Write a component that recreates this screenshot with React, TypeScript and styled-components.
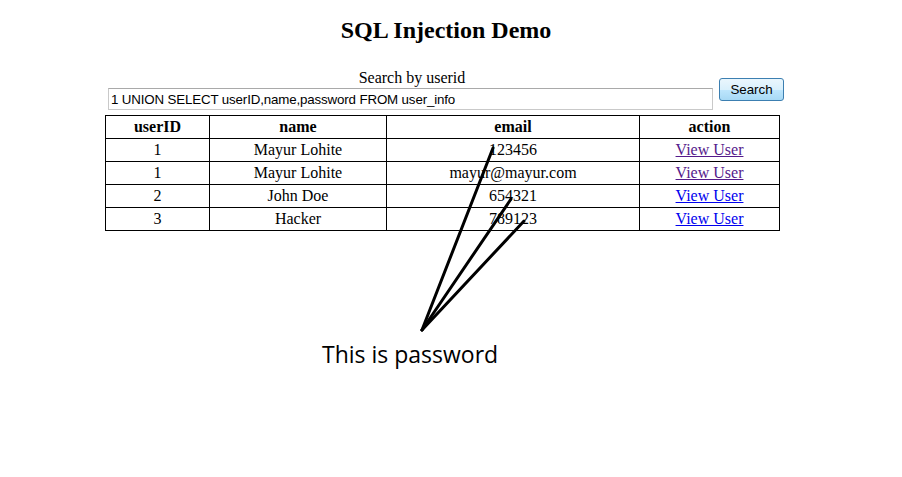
import styled, { createGlobalStyle } from "styled-components";

const GlobalStyle = createGlobalStyle`
  html, body {
    margin: 0;
    padding: 0;
    background: #ffffff;
    font-family: "Liberation Serif", "Times New Roman", serif;
    color: #000000;
  }
`;

type User = { id: string; name: string; email: string; visited: boolean };

const users: User[] = [
  { id: "1", name: "Mayur Lohite", email: "123456", visited: true },
  { id: "1", name: "Mayur Lohite", email: "mayur@mayur.com", visited: true },
  { id: "2", name: "John Doe", email: "654321", visited: false },
  { id: "3", name: "Hacker", email: "789123", visited: false },
];

const columns = [
  { label: "userID", width: 104 },
  { label: "name", width: 177 },
  { label: "email", width: 253 },
  { label: "action", width: 140 },
];

export default function App() {
  return (
    <>
      <GlobalStyle />
      <Page>
        <Title>SQL Injection Demo</Title>
        <SearchForm>
          <Field>
            <Label>Search by userid</Label>
            <Input defaultValue="1 UNION SELECT userID,name,password FROM user_info" />
          </Field>
          <SearchButton>Search</SearchButton>
        </SearchForm>
        <Table>
          <colgroup>
            {columns.map((c) => (
              <col key={c.label} style={{ width: c.width }} />
            ))}
          </colgroup>
          <thead>
            <tr>
              {columns.map((c) => (
                <Th key={c.label}>{c.label}</Th>
              ))}
            </tr>
          </thead>
          <tbody>
            {users.map((u, i) => (
              <tr key={i}>
                <Td>{u.id}</Td>
                <Td>{u.name}</Td>
                <Td>{u.email}</Td>
                <Td>
                  <UserLink href="#" $visited={u.visited}>
                    View User
                  </UserLink>
                </Td>
              </tr>
            ))}
          </tbody>
        </Table>
        <Note>This is password</Note>
        <Arrows width="902" height="477" viewBox="0 0 902 477">
          <g stroke="#000" strokeWidth="3" strokeLinecap="round" fill="none">
            <line x1="422" y1="330" x2="493" y2="148" />
            <line x1="422" y1="330" x2="511" y2="199" />
            <line x1="422" y1="330" x2="524" y2="221" />
          </g>
        </Arrows>
      </Page>
    </>
  );
}

const Page = styled.div`
  position: relative;
  width: 902px;
  height: 477px;
  overflow: hidden;
`;

const Title = styled.h1`
  width: 892px;
  margin: 0;
  padding-top: 16px;
  text-align: center;
  font-size: 24px;
  line-height: 28px;
  font-weight: bold;
`;

const SearchForm = styled.div`
  display: flex;
  align-items: center;
  margin: 25px 0 0 108px;
`;

const Field = styled.div`
  display: flex;
  flex-direction: column;
  align-items: center;
  width: 605px;
`;

const Label = styled.div`
  font-size: 16px;
  line-height: 18px;
  margin-bottom: 1px;
  padding-left: 3px;
`;

const Input = styled.input`
  box-sizing: border-box;
  width: 605px;
  height: 22px;
  padding: 0 2px;
  border: 1px solid #c9c9c9;
  border-top-color: #a9a9a9;
  font-family: "Liberation Sans", Arial, sans-serif;
  font-size: 13.33px;
  letter-spacing: -0.15px;
  color: #000;
  outline: none;
`;

const SearchButton = styled.button`
  box-sizing: border-box;
  margin-left: 6px;
  width: 65px;
  height: 23px;
  padding: 0;
  border: 1px solid #3c7fb1;
  border-radius: 3px;
  background: linear-gradient(#eaf6fd 0%, #d9f0fc 50%, #bee6fd 51%, #a7d9f5 100%);
  font-family: "Liberation Sans", Arial, sans-serif;
  font-size: 13.33px;
  color: #000;
`;

const Table = styled.table`
  margin: 5px 0 0 105px;
  width: 675px;
  border-collapse: collapse;
  table-layout: fixed;
  border: 1px solid #000;
`;

const Th = styled.th`
  border: 1px solid #000;
  height: 22px;
  padding: 0;
  font-size: 16px;
  font-weight: bold;
  text-align: center;
`;

const Td = styled.td`
  border: 1px solid #000;
  height: 22px;
  padding: 0;
  font-size: 16px;
  text-align: center;
`;

const UserLink = styled.a<{ $visited: boolean }>`
  color: ${(p) => (p.$visited ? "#551a8b" : "#0000ee")};
  text-decoration: underline;
`;

const Note = styled.div`
  margin: 108px 0 0 322px;
  font-family: "Open Sans", "Noto Sans", sans-serif;
  font-size: 23px;
  line-height: 30px;
  color: #000;
`;

const Arrows = styled.svg`
  position: absolute;
  left: 0;
  top: 0;
  pointer-events: none;
`;
